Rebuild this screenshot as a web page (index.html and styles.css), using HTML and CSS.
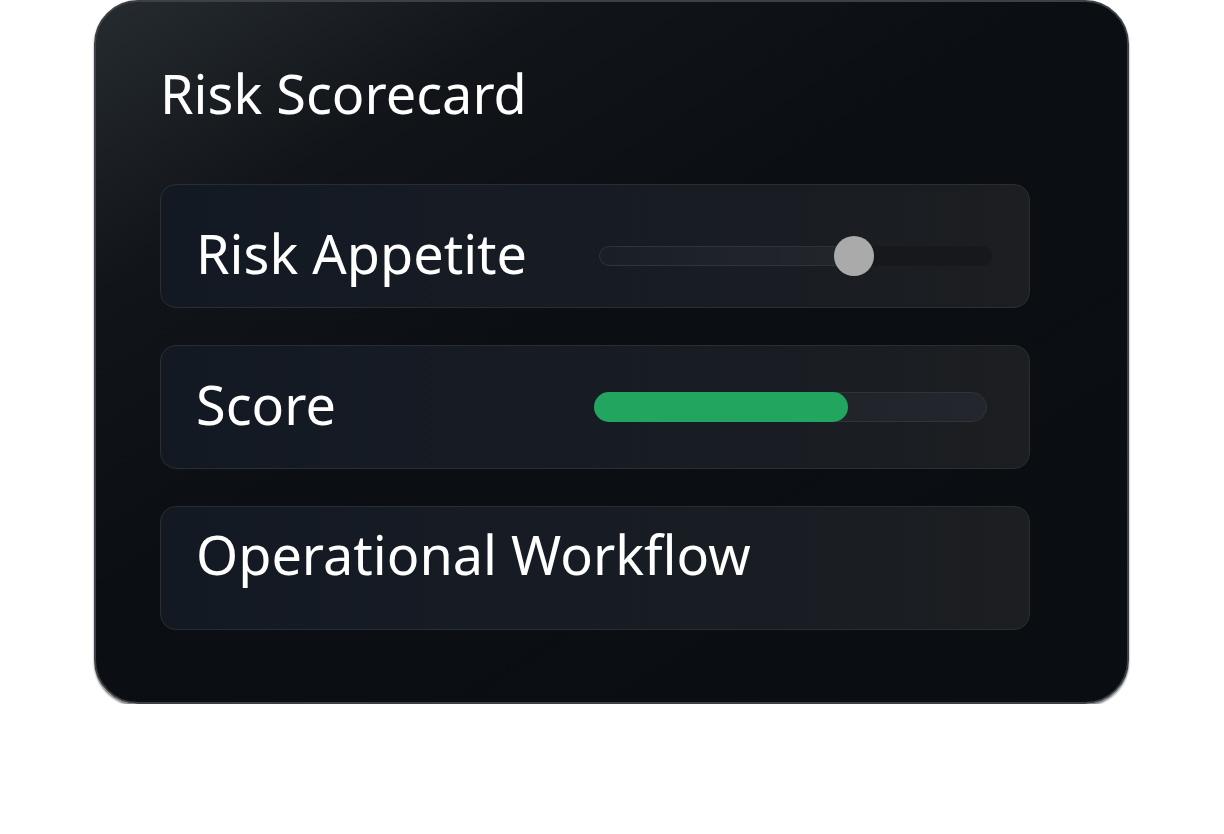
FILE: index.html
```html
<!DOCTYPE html>
<html lang="en">
<head>
    <meta charset="UTF-8">
    <meta name="viewport" content="width=device-width, initial-scale=1.0">
    <title>Risk Scorecard</title>
    <link rel="stylesheet" href="styles.css">
</head>
<body>

    <div class="card">
        <h2 class="card-title">Risk Scorecard</h2>

        <div class="rows">
            <div class="row row-slider">
                <span class="row-label">Risk Appetite</span>
                <div class="slider">
                    <div class="slider-fill" style="width: 65%;"></div>
                    <div class="slider-thumb" style="left: 65%;"></div>
                </div>
            </div>

            <div class="row row-score">
                <span class="row-label">Score</span>
                <div class="score-bar">
                    <div class="score-fill" style="width: 65%;"></div>
                </div>
            </div>

            <div class="row row-plain">
                <span class="row-label">Operational Workflow</span>
            </div>
        </div>
    </div>

</body>
</html>
```

FILE: styles.css
```css
body {
    font-family: "Noto Sans", "Open Sans", sans-serif;
    background-color: #ffffff;
    margin: 0;
    padding: 0;
}

.card {
    box-sizing: border-box;
    width: 1035px;
    height: 704px;
    margin-left: 94px;
    padding: 59px 97px 0 64px;
    border: 2px solid #3d4046;
    border-radius: 44px;
    background: linear-gradient(148deg, #262b2f 0%, #111519 22%, #0b0f13 45%, #0a0e12 100%);
    box-shadow: 0 2px 2px rgba(40, 42, 46, 0.6);
}

.card-title {
    margin: 0 0 58px 0;
    font-size: 54px;
    font-weight: 400;
    line-height: 1.2;
    color: #ffffff;
}

.rows {
    display: flex;
    flex-direction: column;
    gap: 37px;
}

.row {
    box-sizing: border-box;
    height: 124px;
    display: flex;
    align-items: flex-start;
    justify-content: space-between;
    padding: 0 37px 0 35px;
    border: 1px solid #2a2e34;
    border-radius: 16px;
    background: linear-gradient(90deg, #131923 0%, #171c24 50%, #1c1e21 100%);
}

.row-slider {
    padding-top: 36px;
}

.row-score {
    padding-top: 26px;
}

.row-plain {
    padding-top: 15px;
}

.row-label {
    font-size: 54px;
    line-height: 1.2;
    color: #ffffff;
}

.slider {
    position: relative;
    width: 393px;
    height: 20px;
    margin-top: 25px;
    border-radius: 10px;
    background-color: #16181b;
}

.slider-fill {
    box-sizing: border-box;
    height: 100%;
    border: 1px solid #30343a;
    border-radius: 10px;
    background: linear-gradient(90deg, #1a1f27 0%, #23262c 100%);
}

.slider-thumb {
    position: absolute;
    top: -10px;
    width: 40px;
    height: 40px;
    margin-left: -20px;
    border-radius: 50%;
    background-color: #aaaaaa;
}

.score-bar {
    box-sizing: border-box;
    width: 393px;
    height: 30px;
    margin-top: 20px;
    margin-right: 5px;
    border: 1px solid #2f333a;
    border-radius: 15px;
    background: linear-gradient(90deg, #1d2129 0%, #23262c 100%);
}

.score-fill {
    height: 30px;
    margin: -1px 0 0 -1px;
    border-radius: 15px;
    background-color: #22a55e;
}
```
